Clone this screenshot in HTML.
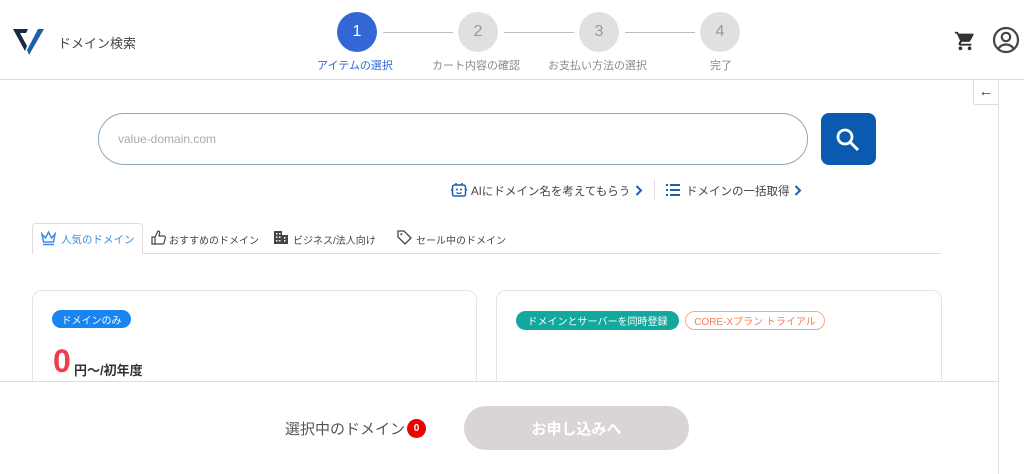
<!DOCTYPE html>
<html><head><meta charset="utf-8"><style>
*{box-sizing:border-box;margin:0;padding:0}
body{width:1024px;height:474px;overflow:hidden;background:#fff;font-family:"Liberation Sans","Noto Sans CJK JP",sans-serif;color:#333;position:relative}
.abs{position:absolute}
.hdr{left:0;top:0;width:1024px;height:80px;border-bottom:1px solid #ddd}
.step{width:40px;height:40px;border-radius:50%;background:#e0e0e0;color:#9a9a9a;font-size:16px;text-align:center;line-height:40px;top:12px}
.sl{font-size:11px;color:#8a8a8a;top:57px;white-space:nowrap}
.line{height:1px;background:#bdbdbd;top:32px}
.tab{font-size:10px;color:#444;top:232px;white-space:nowrap}
.card{border:1px solid #e3e3e3;border-radius:10px;top:290px;height:120px;background:#fff}
.pill{display:flex;align-items:center;justify-content:center;white-space:nowrap}
</style></head><body>
<div class="abs hdr"></div>
<svg class="abs" style="left:13px;top:28px" width="32" height="28" viewBox="0 0 32 28"><path d="M0 1h15l-2 4H7l7 13-2 5z" fill="#1a2a40"/><path d="M14 22L25 1h6L16 27z" fill="#1b5fae"/></svg>
<div class="abs" style="left:58px;top:33px;font-size:13px;color:#444">ドメイン検索</div>

<div class="abs step" style="left:337px;background:#3367d6;color:#fff">1</div>
<div class="abs line" style="left:383px;width:70px"></div>
<div class="abs step" style="left:458px">2</div>
<div class="abs line" style="left:504px;width:70px"></div>
<div class="abs step" style="left:579px">3</div>
<div class="abs line" style="left:625px;width:70px"></div>
<div class="abs step" style="left:700px">4</div>
<div class="abs sl" style="left:317px;color:#3367d6">アイテムの選択</div>
<div class="abs sl" style="left:432px">カート内容の確認</div>
<div class="abs sl" style="left:548px">お支払い方法の選択</div>
<div class="abs sl" style="left:710px">完了</div>

<svg class="abs" style="left:954px;top:30px" width="22" height="22" viewBox="0 0 24 24"><path d="M7 18a2 2 0 100 4 2 2 0 000-4zM1 2v2h2l3.6 7.6-1.4 2.4A2 2 0 007 17h12v-2H7.4l1.1-2h7.5c.8 0 1.4-.4 1.7-1l3.6-6.5A1 1 0 0020.4 4H5.2l-.9-2zm16 16a2 2 0 100 4 2 2 0 000-4z" fill="#333"/></svg>
<svg class="abs" style="left:992px;top:26px" width="28" height="28" viewBox="0 0 28 28"><circle cx="14" cy="14" r="12" fill="none" stroke="#444" stroke-width="2.2"/><circle cx="14" cy="11" r="4.2" fill="none" stroke="#444" stroke-width="2.2"/><path d="M6.5 22.5c2-3 4.5-4 7.5-4s5.5 1 7.5 4" fill="none" stroke="#444" stroke-width="2.2"/></svg>

<div class="abs" style="left:998px;top:80px;width:1px;height:394px;background:#ddd"></div>
<div class="abs" style="left:973px;top:80px;width:26px;height:25px;border:1px solid #ddd;border-top:none;border-radius:0 0 0 3px;text-align:center;line-height:24px;font-size:15px;color:#444">←</div>

<div class="abs" style="left:98px;top:113px;width:710px;height:52px;border:1px solid #8fa6bd;border-radius:26px"></div>
<div class="abs" style="left:118px;top:132px;font-size:12px;color:#aaa">value-domain.com</div>
<div class="abs" style="left:821px;top:113px;width:55px;height:52px;background:#0a5bb0;border-radius:8px"></div>
<svg class="abs" style="left:834px;top:126px" width="28" height="28" viewBox="0 0 28 28"><circle cx="11" cy="11" r="7" fill="none" stroke="#fff" stroke-width="2.8"/><path d="M16 16l8 8" stroke="#fff" stroke-width="3"/></svg>

<svg class="abs" style="left:451px;top:182px" width="16" height="16" viewBox="0 0 16 16"><rect x="1.5" y="3" width="13" height="11" rx="2" fill="none" stroke="#1b5fae" stroke-width="1.5"/><path d="M5 1v2M11 1v2M0 8h1.5M14.5 8H16" stroke="#1b5fae" stroke-width="1.5"/><circle cx="6" cy="7.5" r="1" fill="#1b5fae"/><circle cx="10" cy="7.5" r="1" fill="#1b5fae"/><path d="M5.5 10.5q2.5 2 5 0" fill="none" stroke="#1b5fae" stroke-width="1.2"/></svg>
<div class="abs" style="left:471px;top:183px;font-size:11.5px;color:#444;white-space:nowrap">AIにドメイン名を考えてもらう</div>
<svg class="abs" style="left:635px;top:185px" width="8" height="11" viewBox="0 0 8 11"><path d="M1.5 1l4.5 4.5L1.5 10" fill="none" stroke="#1b5fae" stroke-width="2"/></svg>
<div class="abs" style="left:654px;top:180px;width:1px;height:20px;background:#ddd"></div>
<svg class="abs" style="left:666px;top:184px" width="14" height="12" viewBox="0 0 14 12"><g fill="#1b5fae"><rect x="0" y="0" width="2" height="2"/><rect x="0" y="5" width="2" height="2"/><rect x="0" y="10" width="2" height="2"/><rect x="4" y="0" width="10" height="2"/><rect x="4" y="5" width="10" height="2"/><rect x="4" y="10" width="10" height="2"/></g></svg>
<div class="abs" style="left:686px;top:183px;font-size:11.5px;color:#444;white-space:nowrap">ドメインの一括取得</div>
<svg class="abs" style="left:794px;top:185px" width="8" height="11" viewBox="0 0 8 11"><path d="M1.5 1l4.5 4.5L1.5 10" fill="none" stroke="#1b5fae" stroke-width="2"/></svg>

<div class="abs" style="left:32px;top:253px;width:909px;height:1px;background:#ddd"></div>
<div class="abs" style="left:32px;top:223px;width:111px;height:31px;border:1px solid #ddd;border-bottom:1px solid #fff;border-radius:4px 4px 0 0;background:#fff"></div>
<svg class="abs" style="left:40px;top:230px" width="17" height="16" viewBox="0 0 17 16"><path d="M2 4l3.5 4L8.5 2l3 6L15 4l-1.5 8h-10z" fill="none" stroke="#3a8de8" stroke-width="1.5"/><path d="M3 14.5h11" stroke="#3a8de8" stroke-width="1.5"/></svg>
<div class="abs tab" style="left:61px;color:#3a8de8;font-size:10.5px">人気のドメイン</div>
<svg class="abs" style="left:151px;top:230px" width="15" height="15" viewBox="0 0 15 15"><path d="M1 7h3v7H1zM4 7l3-6c1.5 0 2 1 1.5 2.5L8 6h5c1 0 1.5 1 1.3 2l-1.3 5c-.2.7-.8 1-1.5 1H4" fill="none" stroke="#444" stroke-width="1.2"/></svg>
<div class="abs tab" style="left:169px">おすすめのドメイン</div>
<svg class="abs" style="left:274px;top:231px" width="14" height="13" viewBox="0 0 14 13"><path d="M0 0h8v13H0zM8 4h6v9H8z" fill="#444"/><g fill="#fff"><rect x="2" y="2" width="1.5" height="1.5"/><rect x="5" y="2" width="1.5" height="1.5"/><rect x="2" y="5.5" width="1.5" height="1.5"/><rect x="5" y="5.5" width="1.5" height="1.5"/><rect x="2" y="9" width="1.5" height="1.5"/><rect x="5" y="9" width="1.5" height="1.5"/><rect x="10" y="6" width="1.5" height="1.5"/><rect x="10" y="9" width="1.5" height="1.5"/></g></svg>
<div class="abs tab" style="left:293px">ビジネス/法人向け</div>
<svg class="abs" style="left:397px;top:230px" width="15" height="15" viewBox="0 0 15 15"><path d="M1 1h6l7 7-6 6-7-7z" fill="none" stroke="#444" stroke-width="1.3"/><circle cx="4.3" cy="4.3" r="1" fill="#444"/></svg>
<div class="abs tab" style="left:416px">セール中のドメイン</div>

<div class="abs card" style="left:32px;width:445px"></div>
<div class="abs card" style="left:496px;width:446px"></div>
<div class="abs pill" style="left:52px;top:310px;width:79px;height:18px;background:#1a84f0;border-radius:9px;color:#fff;font-size:10px">ドメインのみ</div>
<div class="abs" style="left:53px;top:343px;font-size:32px;font-weight:bold;color:#f03c4b;line-height:36px">0</div>
<div class="abs" style="left:74px;top:360px;font-size:13px;font-weight:bold;color:#333">円～/初年度</div>
<div class="abs pill" style="left:516px;top:311px;width:163px;height:19px;background:#13a89e;border-radius:10px;color:#fff;font-size:10px">ドメインとサーバーを同時登録</div>
<div class="abs pill" style="left:685px;top:311px;width:140px;height:19px;border:1px solid #f8a888;border-radius:10px;color:#f57e55;font-size:10px">CORE-Xプラン トライアル</div>

<div class="abs" style="left:0;top:381px;width:998px;height:93px;background:#fff;border-top:1px solid #ddd"></div>
<div class="abs" style="left:285px;top:418px;font-size:15px;color:#555">選択中のドメイン</div>
<div class="abs pill" style="left:407px;top:419px;width:19px;height:19px;border-radius:50%;background:#e00;color:#fff;font-size:10px;font-weight:bold">0</div>
<div class="abs pill" style="left:464px;top:406px;width:225px;height:44px;border-radius:22px;background:#d8d5d4;color:#fff;font-size:15px;font-weight:bold">お申し込みへ</div>
</body></html>
